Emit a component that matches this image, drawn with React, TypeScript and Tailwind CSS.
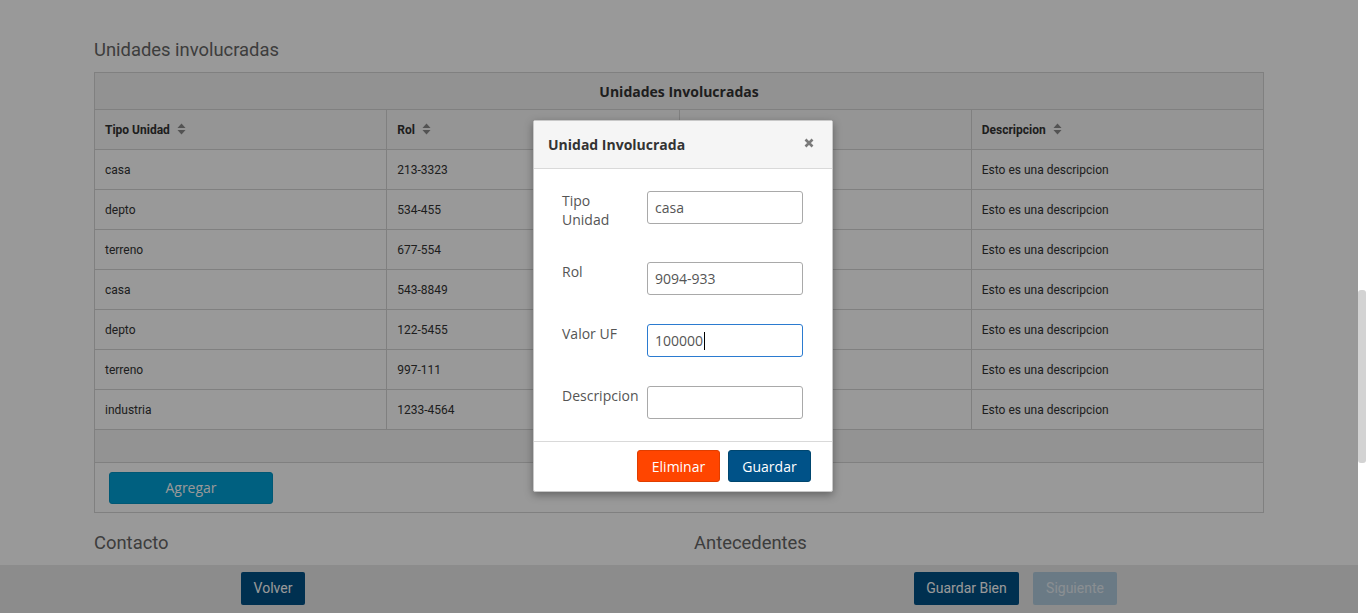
import React from 'react';

const rows = [
  { tipo: 'casa', rol: '213-3323' },
  { tipo: 'depto', rol: '534-455' },
  { tipo: 'terreno', rol: '677-554' },
  { tipo: 'casa', rol: '543-8849' },
  { tipo: 'depto', rol: '122-5455' },
  { tipo: 'terreno', rol: '997-111' },
  { tipo: 'industria', rol: '1233-4564' },
];

const SortIcon: React.FC = () => (
  <svg width="9" height="12" viewBox="0 0 9 12" className="ml-[7px] inline-block align-[-1px]">
    <path d="M4.5 0.5 L8.5 5 L0.5 5 Z" fill="#8a8a8a" />
    <path d="M4.5 11.5 L8.5 7 L0.5 7 Z" fill="#8a8a8a" />
  </svg>
);

const Field: React.FC<{ label: React.ReactNode; value: string; focused?: boolean; tall?: boolean }> = ({
  label,
  value,
  focused,
  tall,
}) => (
  <div className={`flex ${tall ? 'h-[42px]' : 'h-[33px]'}`}>
    <div className="w-[113px] shrink-0 pl-[28px] text-[14px] leading-[19px] text-[#555]">{label}</div>
    <div
      className={`flex h-[33px] w-[156px] shrink-0 items-center rounded-[3px] border px-[7px] text-[14px] text-[#555] ${
        focused ? 'border-[#2b7bd0]' : 'border-[#a9a9a9]'
      }`}
    >
      {value}
      {focused && <span className="ml-[1px] inline-block h-[18px] w-[1px] bg-black" />}
    </div>
  </div>
);

export default function App() {
  return (
    <div className="flex h-[613px] w-full overflow-hidden bg-white font-['Roboto',sans-serif]">
      <div className="relative flex min-w-0 flex-1 flex-col">
        {/* Page content */}
        <div className="flex-1 overflow-hidden px-[94px] pt-[38px]">
          <h3 className="text-[18.4px] leading-[24px] text-[#666]">Unidades involucradas</h3>

          <table className="mt-[10px] w-full table-fixed border-collapse text-[12px] text-[#333]">
            <thead>
              <tr className="h-[37px] bg-[#f3f3f3]">
                <th
                  colSpan={4}
                  className="border border-[#d5d5d5] text-center font-['Open_Sans',sans-serif] text-[14px] font-bold"
                >
                  Unidades Involucradas
                </th>
              </tr>
              <tr className="h-[40px] bg-[#f8f8f8]">
                {['Tipo Unidad', 'Rol', 'Valor UF', 'Descripcion'].map((h) => (
                  <th key={h} className="border border-[#d5d5d5] pl-[10px] text-left font-bold">
                    {h}
                    <SortIcon />
                  </th>
                ))}
              </tr>
            </thead>
            <tbody>
              {rows.map((r, i) => (
                <tr key={i} className="h-[40px]">
                  <td className="border border-[#d5d5d5] pl-[10px]">{r.tipo}</td>
                  <td className="border border-[#d5d5d5] pl-[10px]">{r.rol}</td>
                  <td className="border border-[#d5d5d5] pl-[10px]">100000</td>
                  <td className="border border-[#d5d5d5] pl-[10px]">Esto es una descripcion</td>
                </tr>
              ))}
              <tr className="h-[33px] bg-[#f5f5f5]">
                <td colSpan={4} className="border border-[#d5d5d5]" />
              </tr>
              <tr className="h-[50px]">
                <td colSpan={4} className="border border-[#d5d5d5] pl-[14px]">
                  <button className="h-[32px] w-[164px] rounded-[3px] border border-[#0093c4] bg-[#00a0d5] font-['Open_Sans',sans-serif] text-[14px] text-white">
                    Agregar
                  </button>
                </td>
              </tr>
            </tbody>
          </table>

          <div className="mt-[18px] flex text-[18.4px] leading-[24px] text-[#666]">
            <h3 className="w-[600px]">Contacto</h3>
            <h3>Antecedentes</h3>
          </div>
        </div>

        {/* Bottom action bar */}
        <div className="flex h-[48px] shrink-0 items-start bg-[#e9e9e9] pt-[7px] text-[14px]">
          <button className="ml-[241px] h-[33px] w-[64px] rounded-[2px] bg-[#005085] text-white">Volver</button>
          <button className="ml-[609px] h-[33px] w-[105px] rounded-[2px] bg-[#005085] text-white">
            Guardar Bien
          </button>
          <button className="ml-[14px] h-[33px] w-[84px] rounded-[2px] bg-[#b1cbde] text-[#e6eef4]">
            Siguiente
          </button>
        </div>

        {/* Modal backdrop */}
        <div className="absolute inset-0 bg-black/40" />

        {/* Modal */}
        <div className="absolute left-[533px] top-[120px] w-[300px] rounded-[2px] border border-[#c8c8c8] bg-white font-['Open_Sans',sans-serif] shadow-[0_3px_9px_rgba(0,0,0,0.35)]">
          <div className="flex h-[48px] items-center justify-between border-b border-[#d9d9d9] bg-[#f5f5f5] pl-[14px] pr-[18px]">
            <span className="text-[14px] font-bold text-[#333]">Unidad Involucrada</span>
            <svg width="10" height="10" viewBox="0 0 10 10" className="mb-[4px]">
              <path d="M1.5 1.5 L8.5 8.5 M8.5 1.5 L1.5 8.5" stroke="#7a7a7a" strokeWidth="2.6" />
            </svg>
          </div>
          <div className="flex flex-col gap-[29px] pb-[22px] pt-[22px]">
            <Field
              tall
              label={
                <>
                  Tipo
                  <br />
                  Unidad
                </>
              }
              value="casa"
            />
            <Field label="Rol" value="9094-933" />
            <Field label="Valor UF" value="100000" focused />
            <Field label="Descripcion" value="" />
          </div>
          <div className="flex h-[50px] items-start justify-end gap-[8px] border-t border-[#d9d9d9] pr-[21px] pt-[8px]">
            <button className="h-[32px] w-[83px] rounded-[3px] border border-[#e03e00] bg-[#ff4500] text-[14px] text-white">
              Eliminar
            </button>
            <button className="h-[32px] w-[83px] rounded-[3px] border border-[#00466f] bg-[#005288] text-[14px] text-white">
              Guardar
            </button>
          </div>
        </div>
      </div>

      {/* Scrollbar */}
      <div className="w-[8px] shrink-0 bg-white">
        <div className="mt-[290px] h-[173px] rounded-[3px] bg-[#d3d3d3]" />
      </div>
    </div>
  );
}
